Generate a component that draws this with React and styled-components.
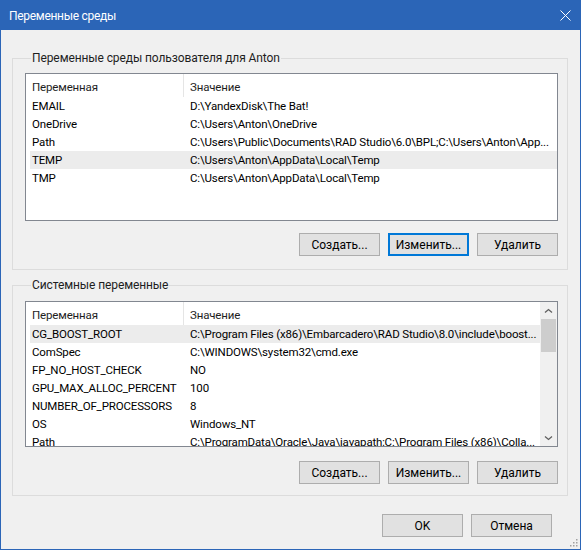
import React from 'react'
import styled, { createGlobalStyle } from 'styled-components'

const GlobalStyle = createGlobalStyle`
  body {
    margin: 0;
    font-family: Roboto, "Liberation Sans", Arial, sans-serif;
    font-size: 11.5px;
    color: #000;
  }
`

const Window = styled.div`
  width: 581px;
  height: 550px;
  box-sizing: border-box;
  border: 1px solid #2b65b7;
  background: #f0f0f0;
  display: flex;
  flex-direction: column;
  position: relative;
`

const TitleBar = styled.div`
  height: 29px;
  background: #2b65b7;
  color: #fff;
  font-size: 12px;
  letter-spacing: -0.3px;
  display: flex;
  align-items: center;
  justify-content: space-between;
  padding: 0 9px 0 8px;
  flex-shrink: 0;
`

const Group = styled.fieldset`
  margin: ${p => p.$top}px 12px 0 11px;
  padding: ${p => p.$pad};
  border: 1px solid #dcdcdc;
  min-width: 0;
`

const Legend = styled.legend`
  margin-left: 6px;
  padding: 0 1px;
  font-size: 12px;
  line-height: 16px;
  letter-spacing: -0.1px;
  color: #1e1e1e;
`

const ListBox = styled.div`
  height: ${p => p.$h}px;
  box-sizing: border-box;
  border: 1px solid #828790;
  background: #fff;
  display: flex;
  overflow: hidden;
`

const ListBody = styled.div`
  flex: 1;
  min-width: 0;
  display: flex;
  flex-direction: column;
  letter-spacing: -0.15px;
`

const Header = styled.div`
  height: 23px;
  flex-shrink: 0;
  display: grid;
  grid-template-columns: 157px 1px 1fr;
  align-items: center;
  color: #1e1e1e;
`

const HeaderCell = styled.div`
  padding: 2px 0 0 6px;
`

const HeaderSep = styled.div`
  height: 23px;
  background: #e5e5e5;
`

const Row = styled.div`
  display: grid;
  grid-template-columns: 158px 1fr;
  height: 18px;
  flex-shrink: 0;
  align-items: center;
  margin-left: 4px;
  background: ${p => (p.$selected ? '#ececec' : 'transparent')};
`

const Cell = styled.div`
  padding-left: 2px;
  white-space: nowrap;
  overflow: hidden;
  text-overflow: ellipsis;
`

const ScrollBar = styled.div`
  width: 17px;
  flex-shrink: 0;
  background: #f0f0f0;
  display: flex;
  flex-direction: column;
`

const ScrollArrow = styled.div`
  height: 17px;
  flex-shrink: 0;
  display: flex;
  align-items: center;
  justify-content: center;
`

const ScrollTrack = styled.div`
  flex: 1;
`

const Thumb = styled.div`
  height: 33px;
  margin: 0 1px;
  background: #cdcdcd;
`

const ButtonRow = styled.div`
  display: flex;
  justify-content: flex-end;
  gap: 8px;
  margin-top: ${p => p.$top}px;
  padding-right: ${p => p.$right || 0}px;
`

const Button = styled.button`
  width: 81px;
  height: 23px;
  box-sizing: border-box;
  padding: 0;
  font-family: inherit;
  font-size: 12px;
  color: #000;
  background: #e1e1e1;
  border: 1px solid ${p => (p.$focused ? '#0078d7' : '#adadad')};
  box-shadow: ${p => (p.$focused ? 'inset 0 0 0 1px #0078d7' : 'none')};
`

const Grip = styled.svg`
  position: absolute;
  right: 2px;
  bottom: 2px;
`

const userVars = [
  ['EMAIL', 'D:\\YandexDisk\\The Bat!'],
  ['OneDrive', 'C:\\Users\\Anton\\OneDrive'],
  ['Path', 'C:\\Users\\Public\\Documents\\RAD Studio\\6.0\\BPL;C:\\Users\\Anton\\App...'],
  ['TEMP', 'C:\\Users\\Anton\\AppData\\Local\\Temp'],
  ['TMP', 'C:\\Users\\Anton\\AppData\\Local\\Temp'],
]

const sysVars = [
  ['CG_BOOST_ROOT', 'C:\\Program Files (x86)\\Embarcadero\\RAD Studio\\8.0\\include\\boost...'],
  ['ComSpec', 'C:\\WINDOWS\\system32\\cmd.exe'],
  ['FP_NO_HOST_CHECK', 'NO'],
  ['GPU_MAX_ALLOC_PERCENT', '100'],
  ['NUMBER_OF_PROCESSORS', '8'],
  ['OS', 'Windows_NT'],
  ['Path', 'C:\\ProgramData\\Oracle\\Java\\javapath;C:\\Program Files (x86)\\Colla...'],
]

function Chevron({ down }) {
  return (
    <svg width="9" height="6" viewBox="0 0 9 6">
      <polyline
        points={down ? '1,1.5 4.5,4.5 8,1.5' : '1,4.5 4.5,1.5 8,4.5'}
        fill="none"
        stroke="#606060"
        strokeWidth="1.3"
      />
    </svg>
  )
}

function VarList({ rows, selected, height, scroll }) {
  return (
    <ListBox $h={height}>
      <ListBody>
        <Header>
          <HeaderCell>Переменная</HeaderCell>
          <HeaderSep />
          <HeaderCell>Значение</HeaderCell>
        </Header>
        {rows.map(([name, value], i) => (
          <Row key={name + i} $selected={i === selected}>
            <Cell>{name}</Cell>
            <Cell>{value}</Cell>
          </Row>
        ))}
      </ListBody>
      {scroll && (
        <ScrollBar>
          <ScrollArrow><Chevron /></ScrollArrow>
          <ScrollTrack><Thumb /></ScrollTrack>
          <ScrollArrow><Chevron down /></ScrollArrow>
        </ScrollBar>
      )}
    </ListBox>
  )
}

export default function App() {
  return (
    <>
      <GlobalStyle />
      <Window>
        <TitleBar>
          <span>Переменные среды</span>
          <svg width="11" height="11" viewBox="0 0 11 11">
            <path d="M0.5 0.5 L10.5 10.5 M10.5 0.5 L0.5 10.5" stroke="#fff" strokeWidth="1" />
          </svg>
        </TitleBar>

        <Group $top={20} $pad="7px 9px 13px 12px">
          <Legend>Переменные среды пользователя для Anton</Legend>
          <VarList rows={userVars} selected={3} height={148} />
          <ButtonRow $top={12}>
            <Button>Создать...</Button>
            <Button $focused>Изменить...</Button>
            <Button>Удалить</Button>
          </ButtonRow>
        </Group>

        <Group $top={7} $pad="8px 9px 11px 12px">
          <Legend>Системные переменные</Legend>
          <VarList rows={sysVars} selected={0} height={146} scroll />
          <ButtonRow $top={14}>
            <Button>Создать...</Button>
            <Button>Изменить...</Button>
            <Button>Удалить</Button>
          </ButtonRow>
        </Group>

        <ButtonRow $top={18} $right={28}>
          <Button>OK</Button>
          <Button>Отмена</Button>
        </ButtonRow>

        <Grip width="10" height="10" viewBox="0 0 10 10">
          <g fill="#a0a0a0">
            <rect x="8" y="2" width="1.5" height="1.5" />
            <rect x="5" y="5" width="1.5" height="1.5" />
            <rect x="8" y="5" width="1.5" height="1.5" />
            <rect x="2" y="8" width="1.5" height="1.5" />
            <rect x="5" y="8" width="1.5" height="1.5" />
            <rect x="8" y="8" width="1.5" height="1.5" />
          </g>
        </Grip>
      </Window>
    </>
  )
}
